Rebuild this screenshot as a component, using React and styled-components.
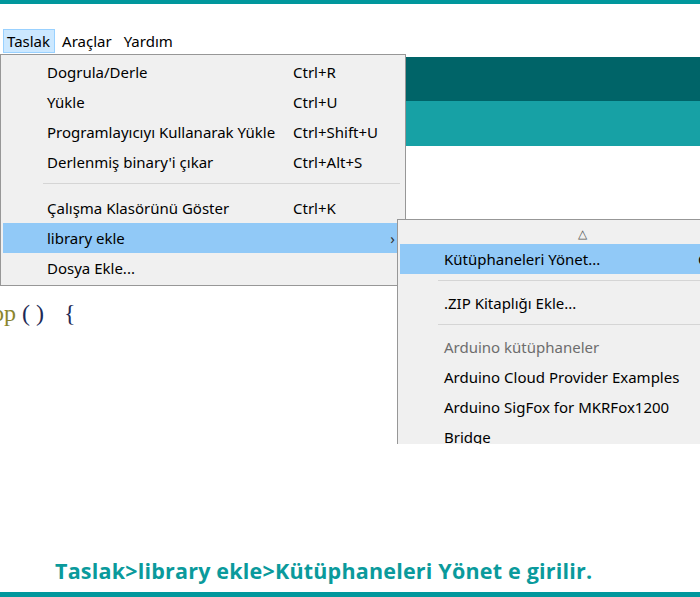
import React from "react";
import styled, { createGlobalStyle } from "styled-components";

const GlobalStyle = createGlobalStyle`
  html, body {
    margin: 0;
    padding: 0;
    background: #ffffff;
  }
`;

const Page = styled.div`
  width: 700px;
  height: 597px;
  display: flex;
  flex-direction: column;
  overflow: hidden;
  background: #fff;
  font-family: "Noto Sans", "Open Sans", sans-serif;
`;

const TealBar = styled.div`
  height: ${(p) => p.h}px;
  flex: none;
  background: #00979c;
`;

const MenuBar = styled.div`
  margin-top: 25px;
  height: 24px;
  display: flex;
  align-items: stretch;
  padding-left: 3px;
  gap: 3px;
  font-size: 15px;
  color: #000;
`;

const MenuTitle = styled.div`
  display: flex;
  align-items: center;
  padding: 0 4px 0 3px;
  border: 1px solid ${(p) => (p.open ? "#99d1ff" : "transparent")};
  background: ${(p) => (p.open ? "#cce8ff" : "transparent")};
`;

const Editor = styled.div`
  position: relative;
  height: 387px;
  flex: none;
  padding-top: 4px;
  display: flex;
  flex-direction: column;
  overflow: hidden;
`;

const Band = styled.div`
  height: ${(p) => p.h}px;
  flex: none;
  background: ${(p) => p.color};
`;

const CodeLine = styled.div`
  margin-top: 152px;
  margin-left: -8px;
  display: flex;
  gap: 6px;
  font-family: "Liberation Serif", "DejaVu Serif", serif;
  font-size: 24px;
  line-height: 30px;
`;

const Fn = styled.span`
  color: #8a862e;
`;

const Punct = styled.span`
  color: #1e2a56;
  margin-left: ${(p) => p.ml || 0}px;
`;

const Menu = styled.div`
  position: absolute;
  left: ${(p) => p.left}px;
  top: ${(p) => p.top}px;
  width: ${(p) => p.w}px;
  padding: 2px 2px;
  box-sizing: border-box;
  background: #f0f0f0;
  border: 1px solid #979797;
  font-size: 15px;
  color: #000;
`;

const Item = styled.div`
  height: 30px;
  display: grid;
  grid-template-columns: ${(p) => p.cols || "1fr"};
  align-items: center;
  padding-left: ${(p) => p.pl}px;
  background: ${(p) => (p.active ? "#91c9f7" : "transparent")};
  color: ${(p) => (p.muted ? "#6d6d6d" : "#000")};
  white-space: nowrap;
  position: relative;
`;

const Arrow = styled.span`
  position: absolute;
  right: 8px;
  top: 5px;
  font-size: 15px;
  color: #333;
`;

const Separator = styled.div`
  height: 1px;
  margin: ${(p) => p.m};
  background: #d5d5d5;
`;

const ScrollUp = styled.div`
  height: 22px;
  display: flex;
  justify-content: center;
  align-items: center;
  padding-left: 40px;
  font-size: 12px;
  color: #555;
`;

const Caption = styled.div`
  margin-top: auto;
  padding: 0 0 7px 55px;
  font-family: "Open Sans", sans-serif;
  font-weight: 700;
  font-size: 21.5px;
  letter-spacing: 0.2px;
  color: #0a9a9c;
`;

const mainItems = [
  { label: "Dogrula/Derle", key: "Ctrl+R" },
  { label: "Yükle", key: "Ctrl+U" },
  { label: "Programlayıcıyı Kullanarak Yükle", key: "Ctrl+Shift+U" },
  { label: "Derlenmiş binary'i çıkar", key: "Ctrl+Alt+S" },
  { sep: true },
  { label: "Çalışma Klasörünü Göster", key: "Ctrl+K" },
  { label: "library ekle", active: true, sub: true },
  { label: "Dosya Ekle..." },
];

const libItems = [
  { label: "Kütüphaneleri Yönet...", key: "Ctrl+Shift+I", active: true },
  { sep: true },
  { label: ".ZIP Kitaplığı Ekle..." },
  { sep: true },
  { label: "Arduino kütüphaneler", muted: true },
  { label: "Arduino Cloud Provider Examples" },
  { label: "Arduino SigFox for MKRFox1200" },
  { label: "Bridge" },
];

export default function App() {
  return (
    <Page>
      <GlobalStyle />
      <TealBar h={4} />
      <MenuBar>
        <MenuTitle open>Taslak</MenuTitle>
        <MenuTitle>Araçlar</MenuTitle>
        <MenuTitle>Yardım</MenuTitle>
      </MenuBar>
      <Editor>
        <Band h={44} color="#006468" />
        <Band h={45} color="#17a1a5" />
        <CodeLine>
          <Fn>op</Fn>
          <Punct>( )</Punct>
          <Punct ml={14}>{"{"}</Punct>
        </CodeLine>

        <Menu left={0} top={1} w={406}>
          {mainItems.map((it, i) =>
            it.sep ? (
              <Separator key={i} m="6px 3px 9px 40px" />
            ) : (
              <Item key={i} pl={44} cols="246px 1fr" active={it.active}>
                <span>{it.label}</span>
                <span>{it.key}</span>
                {it.sub && <Arrow>›</Arrow>}
              </Item>
            )
          )}
        </Menu>

        <Menu left={397} top={166} w={330}>
          <ScrollUp>△</ScrollUp>
          {libItems.map((it, i) =>
            it.sep ? (
              <Separator key={i} m="6px 0 7px 38px" />
            ) : (
              <Item
                key={i}
                pl={44}
                cols="254px 1fr"
                active={it.active}
                muted={it.muted}
              >
                <span>{it.label}</span>
                <span>{it.key}</span>
              </Item>
            )
          )}
        </Menu>
      </Editor>
      <Caption>Taslak&gt;library ekle&gt;Kütüphaneleri Yönet e girilir.</Caption>
      <TealBar h={5} />
    </Page>
  );
}
